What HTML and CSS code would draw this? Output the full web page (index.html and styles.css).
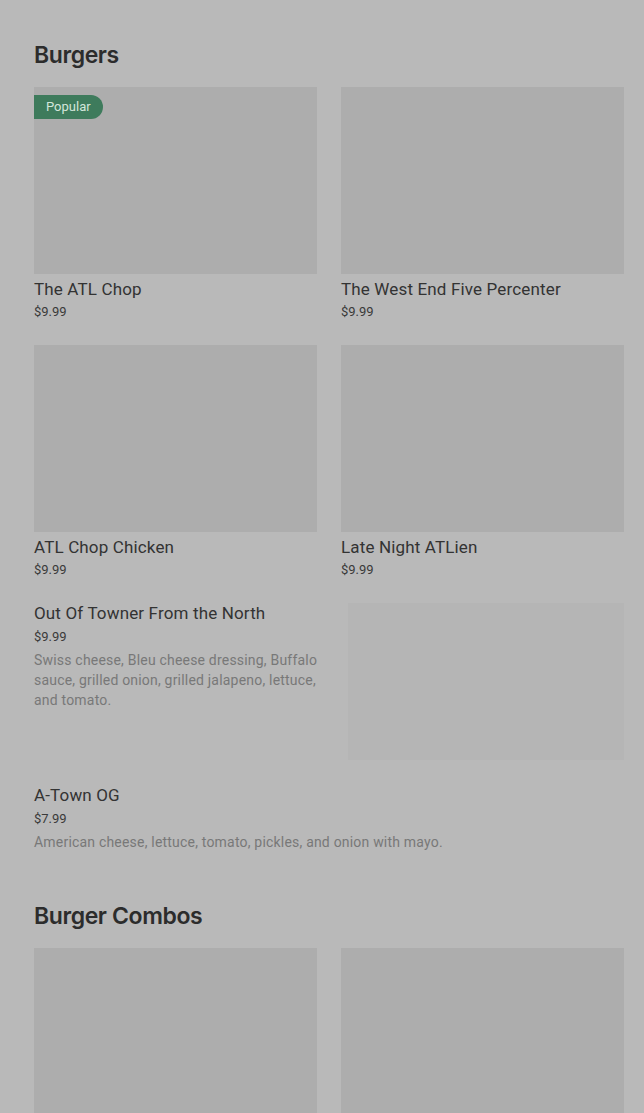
FILE: index.html
```html
<!DOCTYPE html>
<html lang="en">
<head>
    <meta charset="UTF-8">
    <meta name="viewport" content="width=device-width, initial-scale=1.0">
    <title>Menu</title>
    <link rel="stylesheet" href="styles.css">
</head>
<body>
    <div class="menu">
        <section class="menu-section">
            <h2 class="section-title">Burgers</h2>
            <div class="card-grid">
                <div class="card">
                    <div class="card-image">
                        <span class="badge">Popular</span>
                    </div>
                    <div class="item-name">The ATL Chop</div>
                    <div class="item-price">$9.99</div>
                </div>
                <div class="card">
                    <div class="card-image"></div>
                    <div class="item-name">The West End Five Percenter</div>
                    <div class="item-price">$9.99</div>
                </div>
                <div class="card">
                    <div class="card-image"></div>
                    <div class="item-name">ATL Chop Chicken</div>
                    <div class="item-price">$9.99</div>
                </div>
                <div class="card">
                    <div class="card-image"></div>
                    <div class="item-name">Late Night ATLien</div>
                    <div class="item-price">$9.99</div>
                </div>
            </div>
            <div class="list-item">
                <div class="list-text">
                    <div class="item-name">Out Of Towner From the North</div>
                    <div class="item-price">$9.99</div>
                    <p class="item-desc">Swiss cheese, Bleu cheese dressing, Buffalo sauce, grilled onion, grilled jalapeno, lettuce, and tomato.</p>
                </div>
                <div class="list-image"></div>
            </div>
            <div class="list-item">
                <div class="list-text">
                    <div class="item-name">A-Town OG</div>
                    <div class="item-price">$7.99</div>
                    <p class="item-desc">American cheese, lettuce, tomato, pickles, and onion with mayo.</p>
                </div>
            </div>
        </section>
        <section class="menu-section">
            <h2 class="section-title">Burger Combos</h2>
            <div class="card-grid">
                <div class="card">
                    <div class="card-image"></div>
                </div>
                <div class="card">
                    <div class="card-image"></div>
                </div>
            </div>
        </section>
    </div>
</body>
</html>
```

FILE: styles.css
```css
body {
    margin: 0;
    background-color: #b9b9b9;
    font-family: Roboto, 'Liberation Sans', sans-serif;
    color: #2f2f2f;
    overflow: hidden;
}
.menu {
    padding: 37px 20px 0 34px;
}
.menu-section {
    margin-bottom: 46px;
}
.section-title {
    margin: 0 0 14px;
    font-family: Inter, 'Liberation Sans', sans-serif;
    font-size: 23px;
    font-weight: 600;
    line-height: 36px;
    letter-spacing: -0.4px;
    color: #2c2c2c;
}
.card-grid {
    display: grid;
    grid-template-columns: 1fr 1fr;
    column-gap: 24px;
    row-gap: 24px;
}
.card-image {
    position: relative;
    height: 187px;
    background-color: #adadad;
}
.badge {
    position: absolute;
    top: 8px;
    left: 0;
    padding: 0 12px;
    height: 24px;
    line-height: 24px;
    font-size: 13px;
    color: #d3e6da;
    background-color: #3e7b5c;
    border-radius: 0 12px 12px 0;
}
.item-name {
    margin-top: 4px;
    font-size: 17px;
    line-height: 22px;
    letter-spacing: 0.15px;
    color: #333;
}
.item-price {
    margin-top: 3px;
    font-size: 13px;
    line-height: 18px;
    color: #3a3a3a;
}
.card-grid + .list-item {
    margin-top: 23px;
}
.list-item {
    display: flex;
    gap: 28px;
    margin-bottom: 24px;
}
.list-item:last-child {
    margin-bottom: 0;
}
.list-text {
    flex: 1;
}
.list-text .item-name {
    margin-top: 0;
}
.list-text .item-price {
    margin-top: 4px;
}
.item-desc {
    margin: 4px 0 0;
    font-size: 14px;
    line-height: 20px;
    letter-spacing: 0.2px;
    color: #787878;
}
.list-image {
    width: 276px;
    height: 157px;
    margin-top: 1px;
    background-color: #b5b5b5;
}
```
